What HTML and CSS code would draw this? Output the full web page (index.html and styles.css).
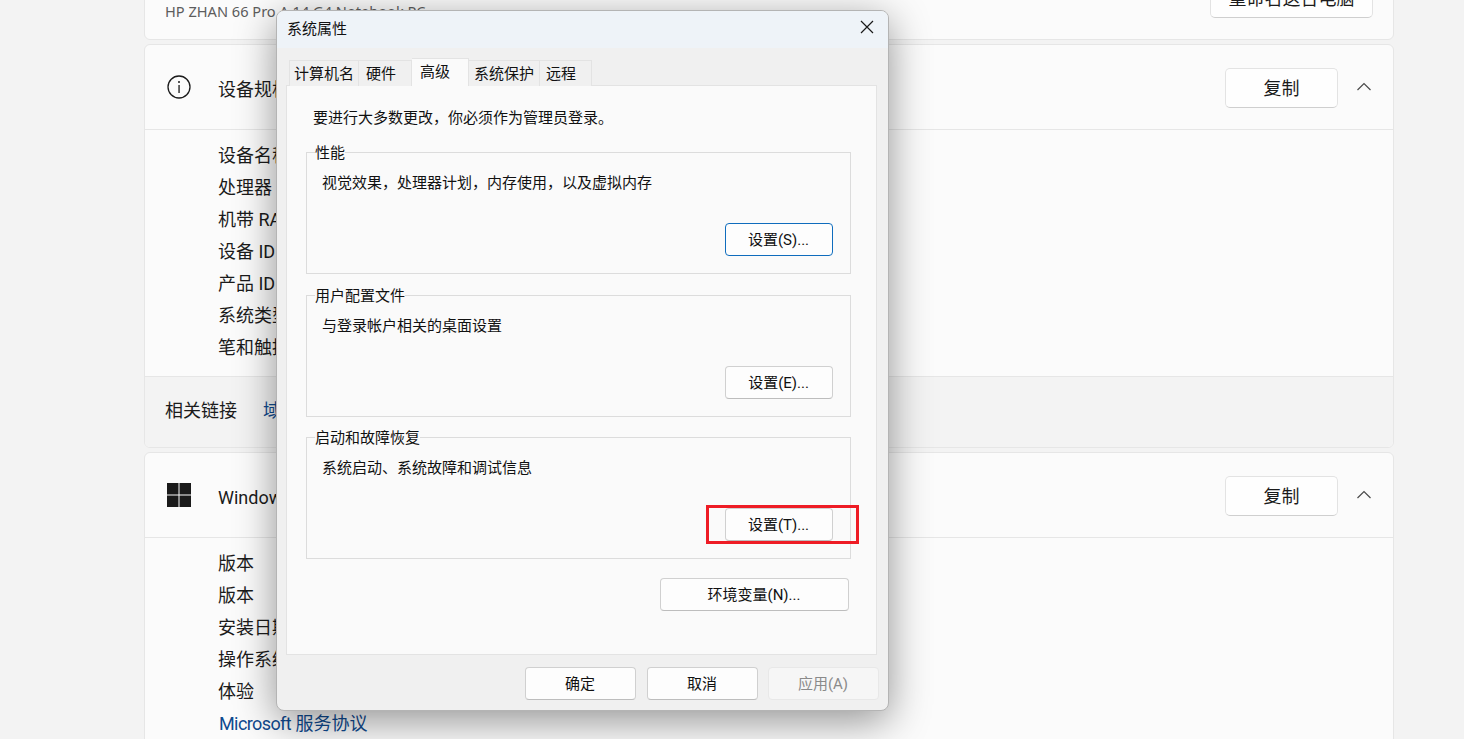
FILE: index.html
```html
<!DOCTYPE html>
<html lang="zh-CN">
<head>
    <meta charset="UTF-8">
    <title>系统属性</title>
    <link rel="stylesheet" href="styles.css">
</head>
<body>
    <main class="settings">
        <section class="card card-top">
            <span class="pc-model">HP ZHAN 66 Pro A 14 G4 Notebook PC</span>
            <button type="button" class="win-btn rename-btn">重命名这台电脑</button>
        </section>

        <section class="card">
            <div class="card-header">
                <svg class="card-icon" width="24" height="24" viewBox="0 0 24 24">
                    <circle cx="12" cy="12" r="11" fill="none" stroke="#1b1b1b" stroke-width="1.3"/>
                    <rect x="11.4" y="10" width="1.3" height="8" fill="#1b1b1b"/>
                    <circle cx="12" cy="7" r="1" fill="#1b1b1b"/>
                </svg>
                <h2>设备规格</h2>
                <button type="button" class="win-btn copy-btn">复制</button>
                <svg class="chevron" width="14" height="9" viewBox="0 0 14 9">
                    <path d="M0.5 8 L7 1.5 L13.5 8" fill="none" stroke="#4a4a4a" stroke-width="1.2"/>
                </svg>
            </div>
            <div class="card-body">
                <div class="row">设备名称</div>
                <div class="row">处理器</div>
                <div class="row">机带 RAM</div>
                <div class="row">设备 ID</div>
                <div class="row">产品 ID</div>
                <div class="row">系统类型</div>
                <div class="row">笔和触控</div>
            </div>
            <div class="card-footer">
                <span>相关链接</span>
                <a class="link" href="#">域或工作组</a>
            </div>
        </section>

        <section class="card">
            <div class="card-header">
                <svg class="card-icon" width="24" height="24" viewBox="0 0 24 24">
                    <rect x="0" y="0" width="11.5" height="11.5" fill="#1a1a1a"/>
                    <rect x="12.5" y="0" width="11.5" height="11.5" fill="#1a1a1a"/>
                    <rect x="0" y="12.5" width="11.5" height="11.5" fill="#1a1a1a"/>
                    <rect x="12.5" y="12.5" width="11.5" height="11.5" fill="#1a1a1a"/>
                </svg>
                <h2>Windows 规格</h2>
                <button type="button" class="win-btn copy-btn">复制</button>
                <svg class="chevron" width="14" height="9" viewBox="0 0 14 9">
                    <path d="M0.5 8 L7 1.5 L13.5 8" fill="none" stroke="#4a4a4a" stroke-width="1.2"/>
                </svg>
            </div>
            <div class="card-body">
                <div class="row">版本</div>
                <div class="row">版本</div>
                <div class="row">安装日期</div>
                <div class="row">操作系统版本</div>
                <div class="row">体验</div>
                <div class="row"><a class="link link-tight" href="#"><span>Microsoft</span> 服务协议</a></div>
            </div>
        </section>
    </main>

    <div class="dialog">
        <div class="dialog-title">
            <span>系统属性</span>
            <svg class="close-icon" width="14" height="14" viewBox="0 0 14 14">
                <path d="M1 1 L13 13 M13 1 L1 13" fill="none" stroke="#1a1a1a" stroke-width="1.2"/>
            </svg>
        </div>
        <div class="tabs">
            <div class="tab tab-name">计算机名</div>
            <div class="tab tab-hw">硬件</div>
            <div class="tab tab-active">高级</div>
            <div class="tab tab-protect">系统保护</div>
            <div class="tab tab-remote">远程</div>
        </div>
        <div class="panel">
            <p class="intro">要进行大多数更改，你必须作为管理员登录。</p>
            <fieldset class="group group-first">
                <legend>性能</legend>
                <p>视觉效果，处理器计划，内存使用，以及虚拟内存</p>
                <button type="button" class="dlg-btn set-btn focused">设置(S)...</button>
            </fieldset>
            <fieldset class="group">
                <legend>用户配置文件</legend>
                <p>与登录帐户相关的桌面设置</p>
                <button type="button" class="dlg-btn set-btn">设置(E)...</button>
            </fieldset>
            <fieldset class="group">
                <legend>启动和故障恢复</legend>
                <p>系统启动、系统故障和调试信息</p>
                <button type="button" class="dlg-btn set-btn marked">设置(T)...</button>
            </fieldset>
            <div class="env-row">
                <button type="button" class="dlg-btn env-btn">环境变量(N)...</button>
            </div>
        </div>
        <div class="dialog-footer">
            <button type="button" class="dlg-btn">确定</button>
            <button type="button" class="dlg-btn">取消</button>
            <button type="button" class="dlg-btn disabled">应用(A)</button>
        </div>
    </div>
</body>
</html>
```

FILE: styles.css
```css
* {
    box-sizing: border-box;
}

body {
    margin: 0;
    height: 739px;
    overflow: hidden;
    background: #f3f3f3;
    color: #1b1b1b;
    font-family: Roboto, "Noto Sans CJK SC", sans-serif;
    font-size: 18px;
}

.settings {
    display: flex;
    flex-direction: column;
    gap: 4px;
    margin-top: -40px;
    padding: 0 70px 0 144px;
}

.card {
    background: #fbfbfb;
    border: 1px solid #e6e6e6;
    border-radius: 6px;
    overflow: hidden;
}

.card-top {
    height: 80px;
    display: flex;
    align-items: flex-start;
    justify-content: space-between;
    padding: 35px 20px 0 20px;
}

.pc-model {
    font-family: "Noto Sans", "Noto Sans CJK SC", sans-serif;
    font-size: 14.6px;
    line-height: 30px;
    color: #5d5d5d;
}

.win-btn {
    padding: 0 0 2px 0;
    font: inherit;
    color: #1b1b1b;
    background: #fefefe;
    border: 1px solid #e3e3e3;
    border-bottom-color: #cfcfcf;
    border-radius: 5px;
}

.rename-btn {
    width: 163px;
    height: 40px;
    margin-top: -18px;
}

.card-header {
    height: 85px;
    display: flex;
    align-items: center;
    padding-left: 22px;
    border-bottom: 1px solid #e6e6e6;
}

.card-icon {
    flex: none;
}

.card-header h2 {
    margin: 0 0 0 27px;
    padding-top: 2px;
    font-size: 18px;
    font-weight: 400;
}

.copy-btn {
    width: 113px;
    height: 40px;
    margin: 2px 0 0 auto;
}

.chevron {
    margin: -1px 22px 0 19px;
}

.card-body {
    padding: 10px 0 12px 73px;
}

.row {
    height: 32px;
    line-height: 32px;
    white-space: nowrap;
}

.card-footer {
    height: 71px;
    display: flex;
    align-items: center;
    gap: 26px;
    padding: 0 0 6px 20px;
    background: #f3f3f3;
    border-top: 1px solid #e6e6e6;
}

.link {
    color: #0f4a8f;
    text-decoration: none;
}

.link-tight {
    margin-left: 1px;
}

.link-tight span {
    letter-spacing: -0.6px;
}

/* dialog sits over the settings page */
.dialog {
    position: absolute;
    left: 276px;
    top: 10px;
    width: 613px;
    height: 701px;
    background: #f0f0f0;
    border: 1px solid #b4b4b4;
    border-radius: 8px;
    box-shadow: 0 10px 40px rgba(0, 0, 0, 0.42);
    font-size: 15px;
    color: #111;
    overflow: hidden;
}

.dialog-title {
    height: 37px;
    display: flex;
    align-items: center;
    justify-content: space-between;
    padding: 1px 14px 6px 10px;
    background: #eef3f8;
}

.tabs {
    display: flex;
    align-items: flex-end;
    height: 37px;
    padding-left: 12px;
}

.tab {
    height: 26px;
    line-height: 26px;
    margin-bottom: -1px;
    background: #f0f0f0;
    border: 1px solid #e3e3e3;
    border-bottom: none;
    border-left: none;
    padding-left: 4px;
    white-space: nowrap;
}

.tab-name {
    width: 70px;
    border-left: 1px solid #e3e3e3;
}

.tab-hw {
    width: 53px;
    padding-left: 7px;
}

.tab-active {
    position: relative;
    width: 57px;
    height: 28px;
    line-height: 26px;
    padding-left: 8px;
    background: #fafafa;
    border-top-color: #e3e3e3;
}

.tab-protect {
    width: 71px;
    padding-left: 5px;
}

.tab-remote {
    width: 52px;
    padding-left: 6px;
}

.panel {
    height: 570px;
    margin: 0 11px 0 9px;
    padding: 0 25px 0 19px;
    background: #fafafa;
    border: 1px solid #e3e3e3;
}

.intro {
    margin: 0;
    padding: 21px 0 0 7px;
    height: 57px;
    line-height: 22px;
}

.group {
    display: block;
    height: 131px;
    margin: 0 0 11px 0;
    padding: 0 17px 0 15px;
    border: 1px solid #dcdcdc;
    min-width: 0;
}

.group-first {
    margin-bottom: 12px;
}

.group legend {
    margin-left: -7px;
    padding: 2px 0 0 0;
    line-height: 16px;
}

.group p {
    margin: 11px 0 0 0;
    line-height: 22px;
}

.dlg-btn {
    display: block;
    width: 111px;
    height: 33px;
    padding: 0 1px 3px 0;
    font: inherit;
    color: #111;
    background: #fdfdfd;
    border: 1px solid #d0d0d0;
    border-bottom-color: #bdbdbd;
    border-radius: 4px;
}

.set-btn {
    width: 108px;
    margin: 29px 0 0 auto;
}

.focused {
    border: 1px solid #0f6cbd;
}

.marked {
    position: relative;
}

/* red annotation box drawn around the button */
.marked::after {
    content: "";
    position: absolute;
    left: -20px;
    right: -27px;
    top: -4px;
    bottom: -4px;
    border: 3px solid #ee1c25;
}

.env-row {
    display: flex;
    justify-content: flex-end;
    padding: 8px 2px 0 0;
}

.env-btn {
    width: 189px;
}

.dialog-footer {
    display: flex;
    justify-content: flex-end;
    gap: 10px;
    padding: 12px 9px 0 0;
}

.dialog-footer .dlg-btn:first-child {
    margin-right: 1px;
}

.disabled {
    color: #8a8a8a;
    background: #f6f6f6;
    border-color: #e8e8e8;
}
```
